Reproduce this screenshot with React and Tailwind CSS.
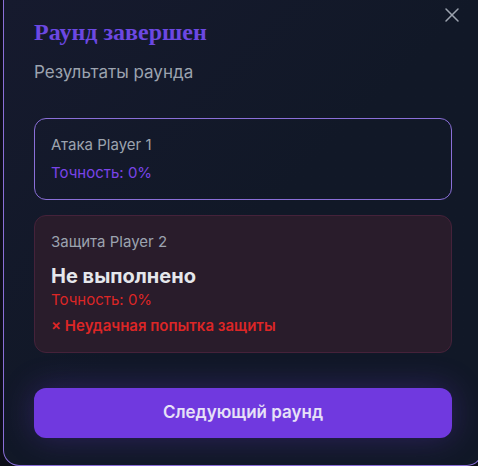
import { X } from 'lucide-react';

const RoundResult = () => {
  return (
    <div className="relative flex w-[480px] h-[466px] flex-col rounded-b-2xl border-x border-b border-[#8a6fd8] bg-gradient-to-br from-[#161a2e] via-[#111827] to-[#111827] px-[30px] pt-4 font-['Inter',sans-serif]">
      <button className="absolute right-[18px] top-[3px] text-[#9ca3af]">
        <X size={24} strokeWidth={1.5} />
      </button>

      <h2 className="font-['Liberation_Serif',serif] text-[24px] font-bold leading-8 text-[#6c48e2]">
        Раунд завершен
      </h2>
      <p className="mt-3 text-[17px] leading-6 text-[#9ca3af]">Результаты раунда</p>

      <div className="mt-[34px] flex flex-col gap-[15px]">
        {/* attacker */}
        <div className="rounded-xl border border-[#8a6fd8] px-4 py-4">
          <p className="text-[15px] leading-5 text-[#9ca3af]">Атака Player 1</p>
          <p className="mt-2 text-[15px] leading-5 text-[#7a44e8]">Точность: 0%</p>
        </div>

        {/* defender */}
        <div className="rounded-xl border border-[#45223a] bg-[#291c2b] px-4 py-4">
          <p className="text-[15px] leading-5 text-[#9ca3af]">Защита Player 2</p>
          <p className="mt-2.5 text-[20px] font-bold leading-7 text-[#e5e7eb]">Не выполнено</p>
          <p className="text-[15px] leading-5 text-[#dc2626]">Точность: 0%</p>
          <p className="mt-1.5 text-[15px] font-semibold leading-5 text-[#dc2626]">× Неудачная попытка защиты</p>
        </div>
      </div>

      <button className="mt-[35px] h-[50px] w-full rounded-xl bg-[#7039df] text-[17px] font-semibold text-[#e6e1f7] shadow-[0_0_32px_rgba(112,57,223,0.3)]">
        Следующий раунд
      </button>
    </div>
  );
};

export default function App() {
  return (
    <div className="w-[478px] h-[466px] overflow-hidden bg-[#0c0d18] pl-[3px]">
      <RoundResult />
    </div>
  );
}
